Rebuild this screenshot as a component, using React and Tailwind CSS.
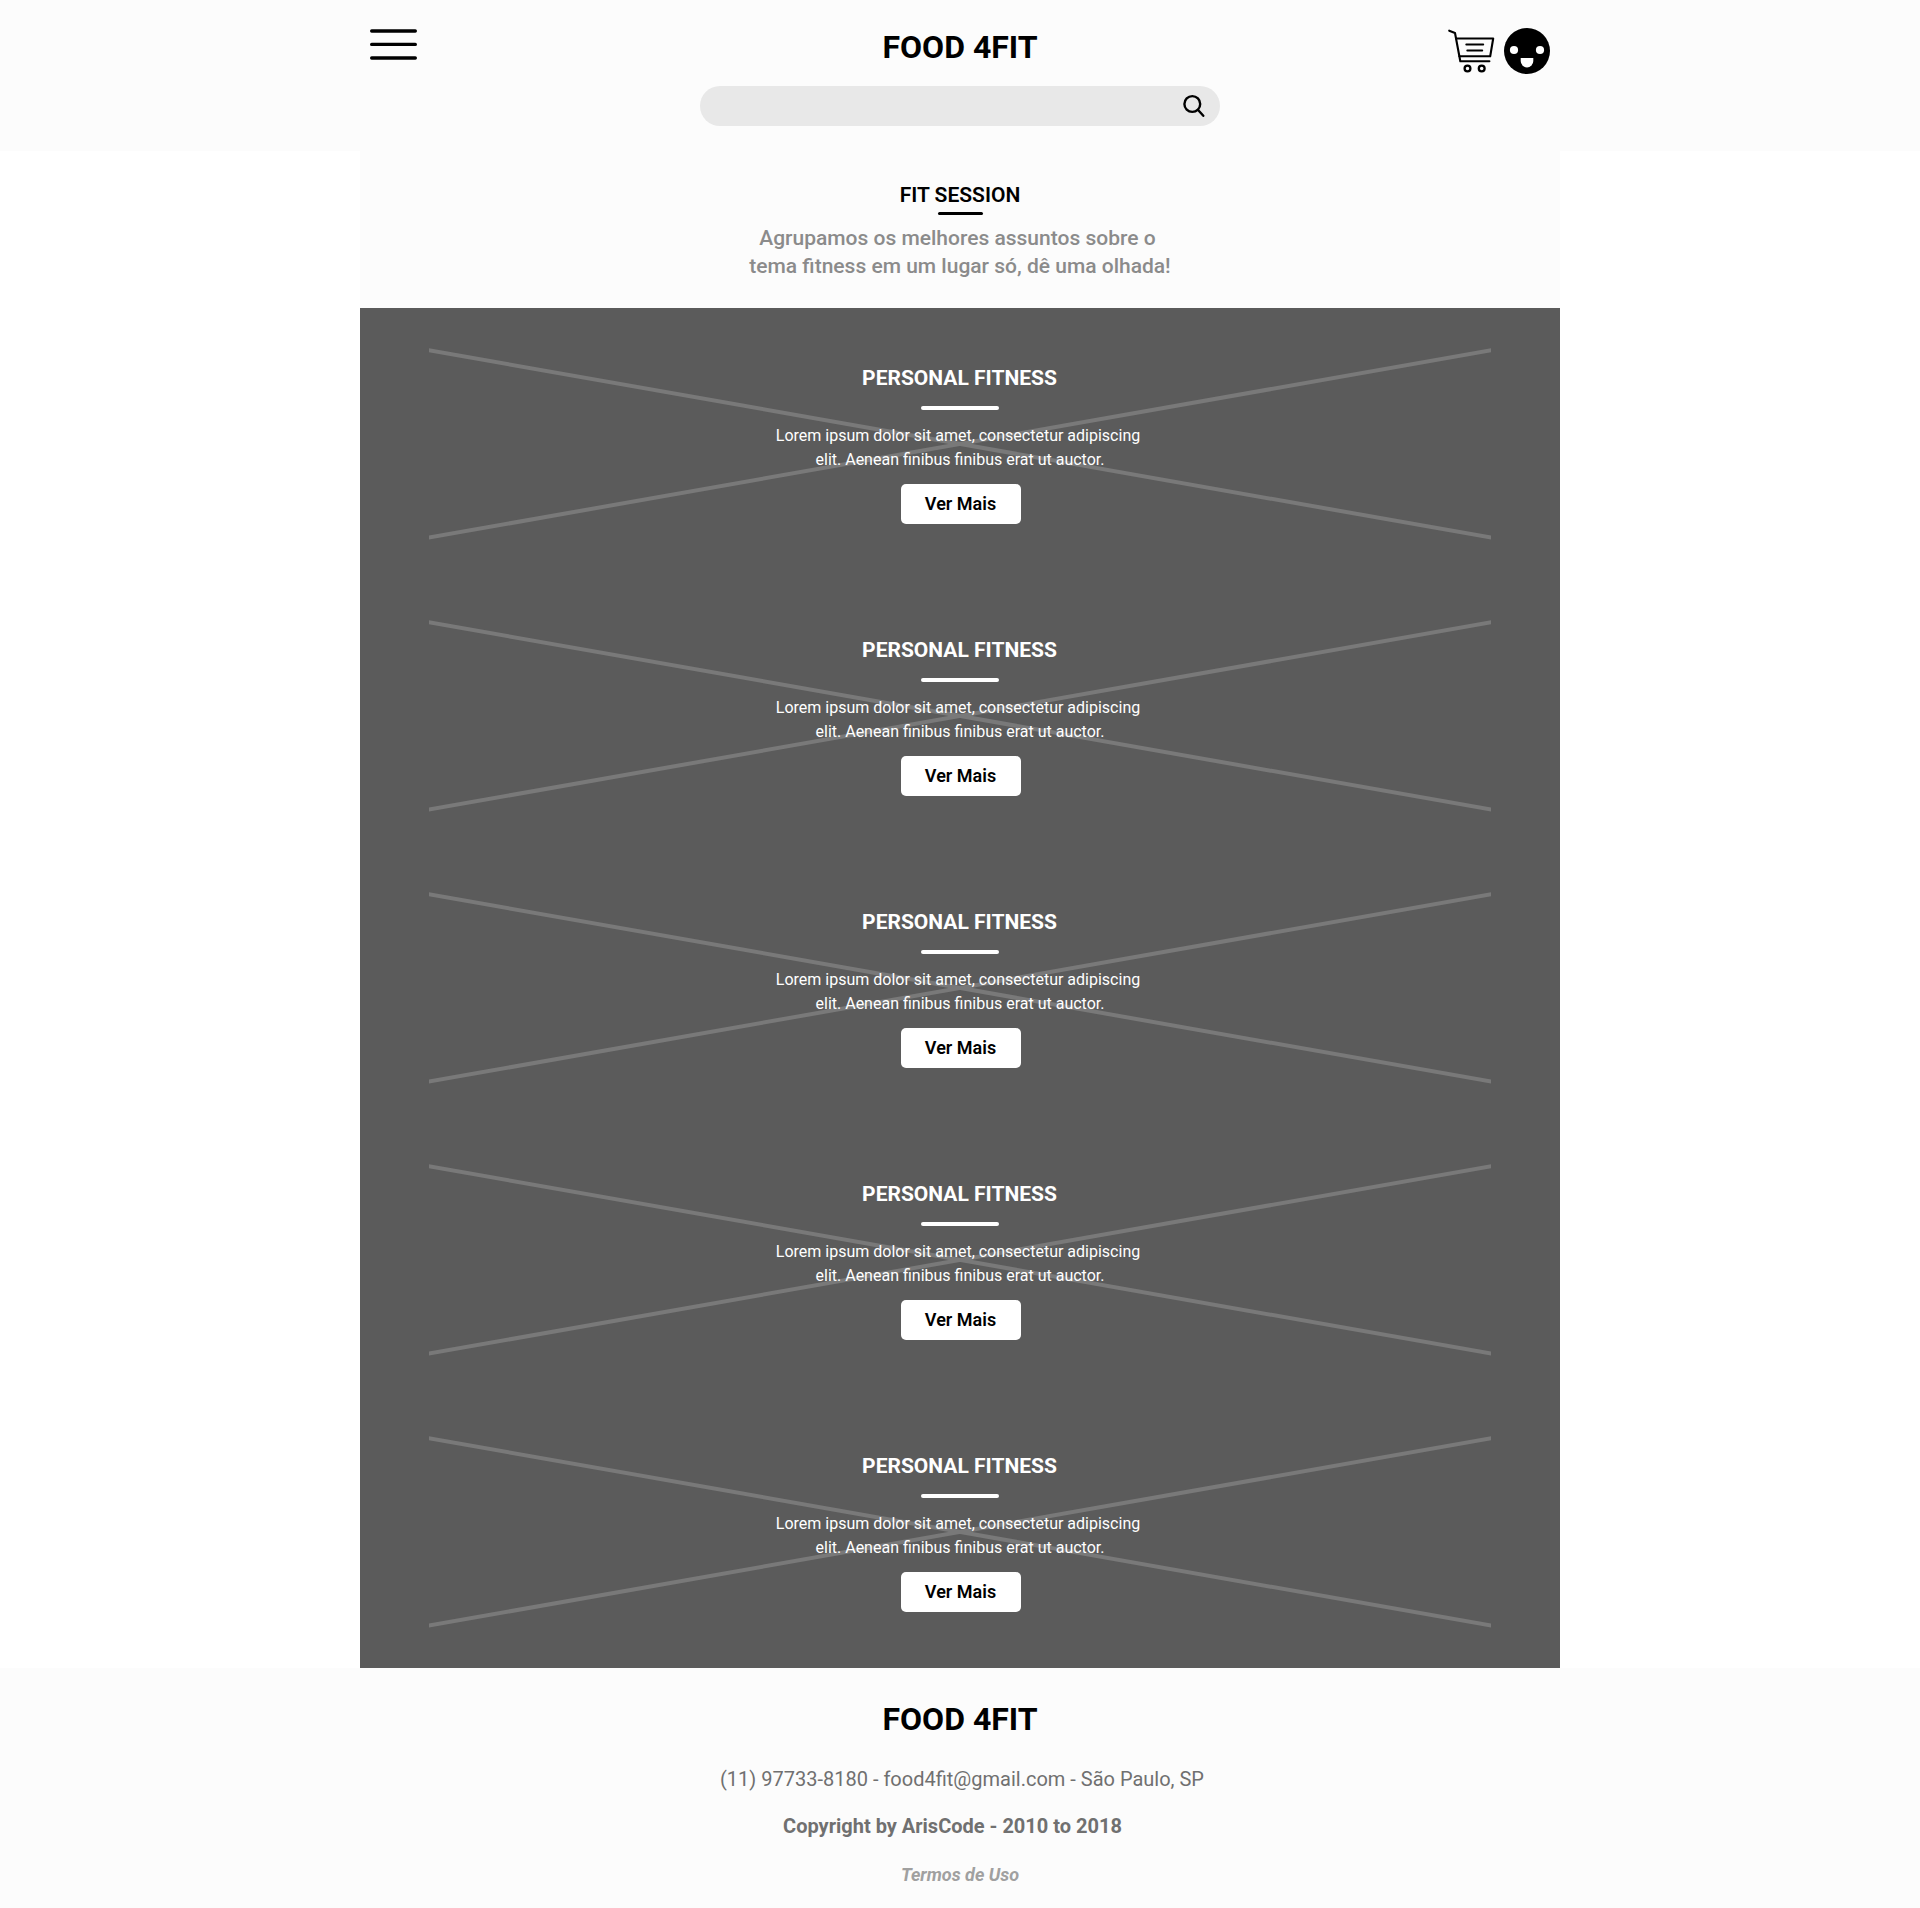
import React from "react";

function MenuIcon() {
  return (
    <svg className="block" width="48" height="36" viewBox="0 0 48 36" fill="none" stroke="#000" strokeWidth="3.4" strokeLinecap="round">
      <path d="M1.7 5H45.3M1.7 18.4H45.3M1.7 32H45.3" />
    </svg>
  );
}

function CartIcon() {
  return (
    <svg className="block" width="50" height="48" viewBox="0 0 50 48" fill="none" stroke="#000" strokeWidth="2.1" strokeLinecap="round" strokeLinejoin="round">
      <path d="M3.2 3.7L9 6L14.3 34.3H43.4" />
      <path d="M10 11.5H47.2L44.2 29.2H13.4" />
      <path d="M20.3 17.5H37.2M21.3 23.4H36.2" strokeWidth="2" />
      <circle cx="21.5" cy="41.5" r="2.9" strokeWidth="2.3" />
      <circle cx="35.7" cy="41.5" r="2.9" strokeWidth="2.3" />
    </svg>
  );
}

function FaceIcon() {
  return (
    <svg className="block" width="46" height="46" viewBox="0 0 46 46">
      <circle cx="23" cy="23" r="23" fill="#000" />
      <circle cx="10" cy="22" r="4.1" fill="#fff" />
      <circle cx="36" cy="22" r="4.1" fill="#fff" />
      <path d="M16.7 30H29.3V33.1A6.3 6.3 0 0 1 16.7 33.1Z" fill="#fff" />
    </svg>
  );
}

function SearchIcon() {
  return (
    <svg className="block" width="24" height="24" viewBox="0 0 24 24" fill="none" stroke="#000" strokeWidth="2.4" strokeLinecap="round">
      <circle cx="10.3" cy="10" r="7.9" />
      <path d="M16.1 16L21.3 21.8" />
    </svg>
  );
}

function Header() {
  return (
    <header className="h-[151px] w-full bg-[#fcfcfc]">
      <div className="mx-auto grid w-[1200px] grid-cols-3 items-start pt-[26px]">
        <button className="w-[58px] pl-[10px]" aria-label="Menu">
          <MenuIcon />
        </button>
        <h1 className="mt-0.5 text-center text-[32px] leading-[38px] font-bold">FOOD 4FIT</h1>
        <div className="-mt-px flex justify-end pr-[10px]">
          <div className="mt-0.5">
            <CartIcon />
          </div>
          <div className="mt-[3px] ml-2">
            <FaceIcon />
          </div>
        </div>
      </div>
      <label className="mx-auto mt-[11px] flex h-10 w-[520px] items-center justify-end rounded-full bg-[#e8e8e8] pr-[14px]">
        <SearchIcon />
      </label>
    </header>
  );
}

function Intro() {
  return (
    <section className="h-[157px] bg-[#fcfcfc] pt-8 text-center text-[21px] font-medium">
      <h2 className="leading-6 font-semibold">FIT SESSION</h2>
      <div className="mx-auto mt-[5px] h-[3px] w-[45px] rounded-full bg-black" />
      <p className="mt-[9px] leading-7 text-[#8b8b8b]">
        Agrupamos os melhores assuntos sobre o&nbsp;
        <br />
        tema fitness em um lugar só, dê uma olhada!
      </p>
    </section>
  );
}

function Card() {
  return (
    <article className="relative h-[272px] bg-[#5b5b5b] text-center text-white">
      <svg className="absolute top-[36px] left-[69px]" width="1062" height="200" viewBox="0 0 1062 200" fill="none" stroke="#797979" strokeWidth="4">
        <path d="M-10 4.5L1072 195.3M-10 195.3L1072 4.5" />
      </svg>
      <div className="relative pt-[58px]">
        <h3 className="pr-px text-[21px] leading-6 font-bold">PERSONAL FITNESS</h3>
        <div className="mt-4 flex justify-center pr-px">
          <div className="h-1 w-[78px] rounded-full bg-white" />
        </div>
        <p className="mt-[14px] text-base leading-6">
          Lorem ipsum dolor sit amet, consectetur adipiscing&nbsp;
          <br />
          elit. Aenean finibus finibus erat ut auctor.
        </p>
        <div className="mt-3 flex justify-center pl-px">
          <button className="h-10 w-[120px] rounded-[5px] bg-white text-lg leading-10 font-semibold text-black">Ver Mais</button>
        </div>
      </div>
    </article>
  );
}

function Footer() {
  return (
    <footer className="h-60 w-full bg-[#fcfcfc] pt-8 text-center">
      <h2 className="text-[32px] leading-[38px] font-bold">FOOD 4FIT</h2>
      <p className="mt-[29px] pl-1 text-xl leading-6 text-[#707070]">(11) 97733-8180 - food4fit@gmail.com - São Paulo, SP</p>
      <p className="mt-[23px] pr-[15px] text-xl leading-6 font-bold text-[#707070]">Copyright by ArisCode - 2010 to 2018</p>
      <a className="mt-[25px] block text-lg leading-[23px] font-bold text-[#a0a0a0] italic">Termos de Uso</a>
    </footer>
  );
}

export default function App() {
  return (
    <div className="min-h-[1908px] w-full bg-white font-['Roboto',sans-serif] text-black">
      <Header />
      <main className="mx-auto w-[1200px]">
        <Intro />
        {[0, 1, 2, 3, 4].map((i) => (
          <Card key={i} />
        ))}
      </main>
      <Footer />
    </div>
  );
}
